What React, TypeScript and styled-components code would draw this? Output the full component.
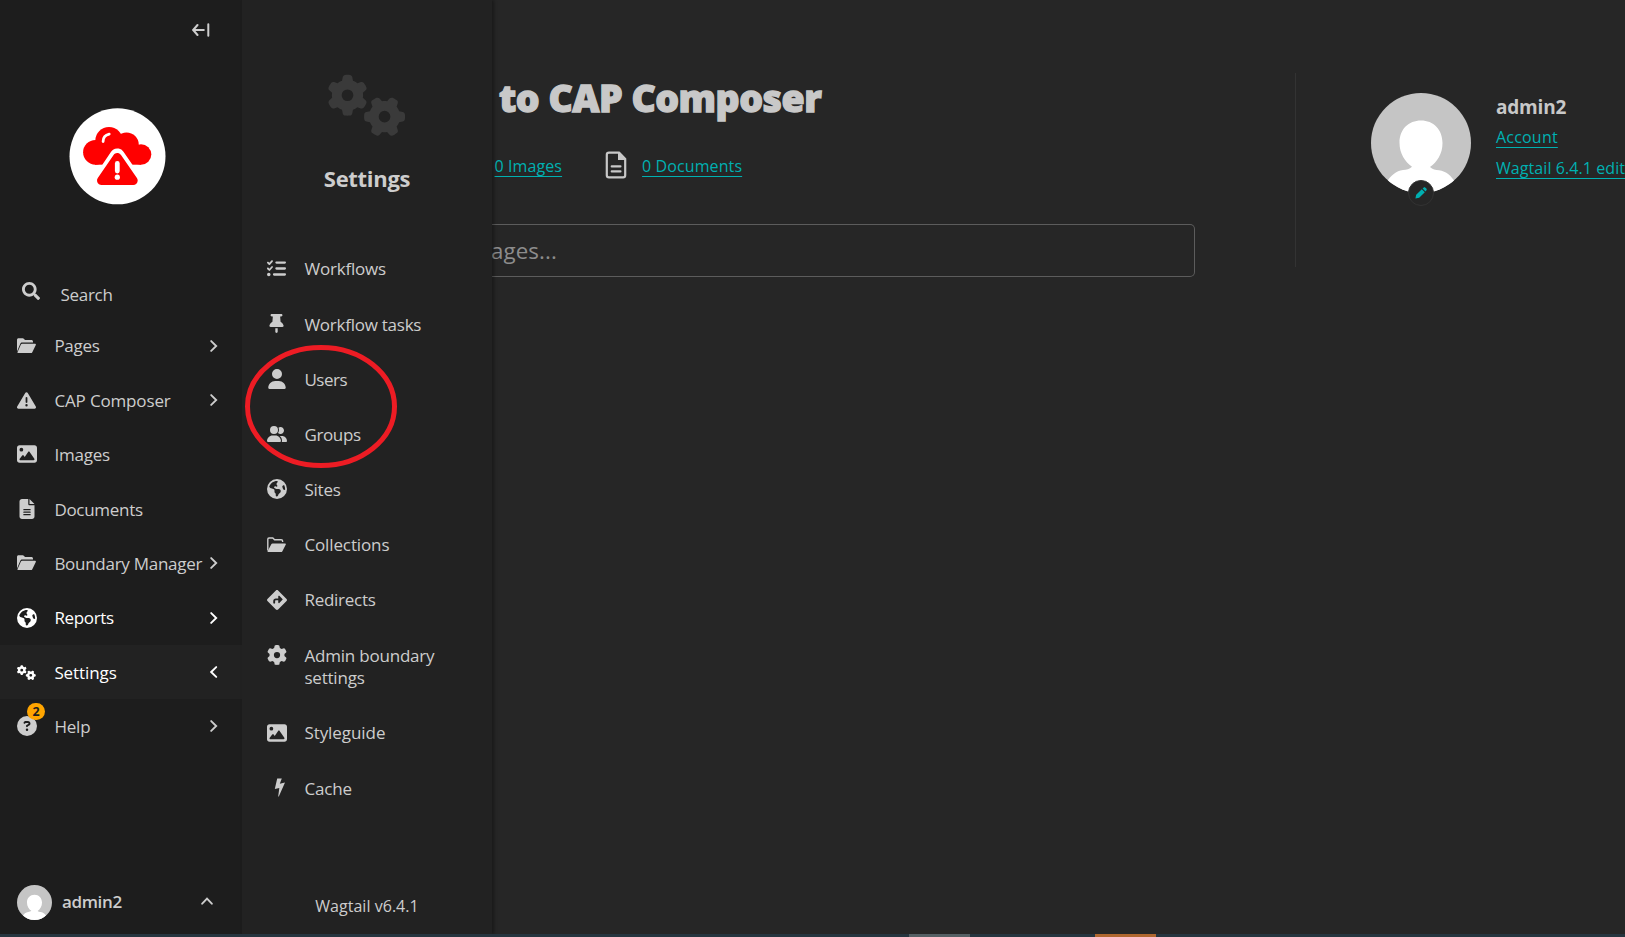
import React from 'react';
import styled, { createGlobalStyle } from 'styled-components';
import {
  FaListCheck, FaThumbtack, FaUser, FaUserGroup, FaEarthAmericas, FaDiamondTurnRight,
  FaGear, FaGears, FaImage, FaTriangleExclamation, FaFileLines, FaCircleQuestion,
} from 'react-icons/fa6';
import { FaSearch } from 'react-icons/fa';

const GlobalStyle = createGlobalStyle`
  * { box-sizing: border-box; }
  body { margin: 0; background: #262626; color: #cdcdcd; font-family: "Open Sans", "Noto Sans", sans-serif; overflow: hidden; }
  h1, h2, h3, ul { margin: 0; padding: 0; }
  svg { display: block; }
`;

const Page = styled.div`display: flex; flex-direction: column; width: 1625px; height: 937px; overflow: hidden; position: relative;`;
const Columns = styled.div`display: flex; height: 934px; overflow: hidden;`;

const Sidebar = styled.nav`width: 242px; flex: none; background: #1d1d1d; display: flex; flex-direction: column;`;
const CollapseBar = styled.div`height: 60px; padding: 23px 0 0 192px;`;
const LogoWrap = styled.div`height: 204px; padding: 47.5px 0 0 69px;`;
const SearchRow = styled.div`height: 54.5px; display: flex; padding-left: 22px;`;
const SearchIcon = styled.span`padding-top: 18px; width: 38.5px;`;
const SearchLabel = styled.span<{ $ls?: number }>`padding-top: 19px; font-size: 17px; line-height: 24px; letter-spacing: ${p => p.$ls ?? 0}px;`;
const NavRow = styled.div<{ $active?: boolean; $bright?: boolean }>`
  height: 54.4px; display: flex; align-items: center; padding-left: 17px; flex: none; position: relative;
  background: ${p => (p.$active ? '#222222' : 'transparent')};
  color: ${p => (p.$bright ? '#ffffff' : '#cdcdcd')};
`;
const IconBox = styled.span`width: 37.4px; flex: none; position: relative; display: flex; align-items: center;`;
const NavLabel = styled.span<{ $ls?: number }>`
  width: 155.6px; padding-top: 1.6px; font-size: 17px; line-height: 22px; white-space: nowrap; letter-spacing: ${p => p.$ls ?? 0}px;
`;
const Badge = styled.span`
  position: absolute; left: 10px; top: -13px; width: 18px; height: 17px; border-radius: 9px; background: #ffa500; color: #1d1d1d;
  font-size: 12.5px; font-weight: 700; line-height: 17px; text-align: center;
`;
const Account = styled.div`margin-top: auto; height: 49px; padding: 0 29px 0 17px; display: flex; align-items: flex-start;`;
const AccountName = styled.span`width: 149px; padding: 4px 0 0 10px; font-size: 17px; line-height: 25px; font-weight: 600; letter-spacing: -0.35px;`;
const AccountCaret = styled.span`padding-top: 12px;`;

const Submenu = styled.section`
  width: 250px; flex: none; background: #222222; display: flex; flex-direction: column; align-items: center;
  box-shadow: 2px 0 3px rgba(0, 0, 0, 0.35); z-index: 1;
`;
const SubmenuIcon = styled.div`margin-top: 66px; height: 97px; color: #3a3a3a;`;
const SubmenuTitle = styled.h2`font-size: 22px; line-height: 30px; font-weight: 700; height: 78px; letter-spacing: -0.3px;`;
const SubList = styled.ul`width: 100%; list-style: none;`;
const SubRow = styled.li`display: flex; padding: 16.35px 20px 16.35px 25px; min-height: 55.2px;`;
const SubIcon = styled.span`width: 37.4px; flex: none; height: 22.5px; display: flex; align-items: center;`;
const SubLabel = styled.span<{ $ls?: number }>`font-size: 17px; line-height: 22.5px; width: 150px; position: relative; top: 1px; letter-spacing: ${p => p.$ls ?? 0}px;`;
const Version = styled.div`margin: auto 0 16px; font-size: 16px; line-height: 24px; letter-spacing: 0.03px;`;

const Main = styled.main`flex: 1; min-width: 0; display: flex; padding-top: 73px;`;
const Overview = styled.div`width: 703px; flex: none;`;
const Title = styled.h1`
  padding-left: 7px; font-size: 37.5px; line-height: 50px; height: 52px; font-weight: 800; letter-spacing: -0.5px; color: #c8c8c8;
  white-space: nowrap; -webkit-text-stroke: 1.3px #c8c8c8;
`;
const Summary = styled.div`height: 99px; padding: 26px 0 0 2.5px; display: flex;`;
const SummaryIcon = styled.span`padding: 0 15px 0 43px;`;
const Link = styled.a<{ $ls?: number }>`
  color: #00b0b1; font-size: 16px; line-height: 22px; height: 22px; white-space: nowrap; text-decoration: underline;
  text-underline-offset: 4px; text-decoration-thickness: 1px; letter-spacing: ${p => p.$ls ?? 0.1}px;
`;
const SummaryLink = styled(Link)`margin-top: 4px;`;
const SearchField = styled.div`
  height: 53px; border: 1px solid #5c5c5c; border-left: 0; border-radius: 0 5px 5px 0; font-size: 22.3px; line-height: 52px;
  color: #8c8c8c; letter-spacing: 0.1px; text-indent: -1px;
`;
const Profile = styled.aside`margin-left: 100px; height: 194px; border-left: 1px solid #333333; padding: 20px 0 0 75px; display: flex; flex: none;`;
const AvatarWrap = styled.div`position: relative; width: 100px; height: 100px; margin-right: 25px;`;
const EditBadge = styled.span`
  position: absolute; left: 37px; top: 87px; width: 26px; height: 26px; border-radius: 50%; background: #262626; border: 1px solid #333333;
  display: flex; align-items: center; justify-content: center;
`;
const ProfileText = styled.div`display: flex; flex-direction: column; align-items: flex-start; width: 129px;`;
const ProfileName = styled.h3`font-size: 19px; line-height: 26px; font-weight: 700; margin: 1px 0 6px; color: #c8c8c8; letter-spacing: -0.2px;`;
const ProfileLink = styled(Link)`margin-bottom: 9px;`;

const Highlight = styled.svg`position: absolute; left: 244px; top: 344px; z-index: 3;`;
const Taskbar = styled.div`height: 3px; display: flex; background: #26353f;`;
const Task = styled.span<{ $gap: number; $color: string }>`margin-left: ${p => p.$gap}px; width: 61px; background: ${p => p.$color};`;

const Chevron = ({ dir }: { dir: 'left' | 'right' | 'up' }) => dir === 'up' ? (
  <svg width="12" height="8" viewBox="0 0 12 8"><path d="M1.2 6.7 6 1.7l4.8 5" fill="none" stroke="currentColor" strokeWidth="1.9" strokeLinecap="round" /></svg>
) : (
  <svg width="8" height="12" viewBox="0 0 8 12"><path d={dir === 'right' ? 'M1.2 1.1 6.2 6l-5 4.9' : 'M6.2 1.1 1.2 6l5 4.9'} fill="none" stroke="currentColor" strokeWidth="1.9" strokeLinecap="round" /></svg>
);

const FolderOpen = () => (
  <svg width="19" height="16" viewBox="0 0 19 16" fill="currentColor">
    <path d="M0 13.5V1.8C0 .9.7.3 1.5.3h4.2c.5 0 .8.2 1.1.5l1.2 1.3h6.4c.9 0 1.6.7 1.6 1.5v1H5.2c-.9 0-1.5.5-1.9 1.2z" />
    <path d="M5.2 5.8h12.9c.7 0 1 .5.7 1.1l-3.5 7.3c-.3.6-.8.9-1.4.9H1.2c-.6 0-.9-.5-.6-1L3.9 6.6c.3-.5.7-.8 1.3-.8z" />
  </svg>
);

const FolderOutline = () => (
  <svg width="19" height="16" viewBox="0 0 19 16" fill="currentColor">
    <path d="M.8 13.5V2.2C.8 1.4 1.3 1 2 1h3.8l1.8 1.8h6.6c.9 0 1.4.5 1.4 1.3v.8" fill="none" stroke="currentColor" strokeWidth="1.4" />
    <path d="M5.500 6.500h12.600c.7 0 1 .5.7 1l-3.4 6.700c-.3.6-.8.9-1.4.9H1.300c-.6 0-.9-.4-.6-1L4.300 7.300c.3-.5.6-.8 1.200-.8z" />
  </svg>
);

const Bolt = () => (
  <svg width="20" height="19" viewBox="0 0 20 19"><path d="M10.2.4h4.6l-2 5.3 5.2-1.2-6.2 14h-.6l1.1-8.6-4.5 1.2z" fill="currentColor" /></svg>
);

const Pencil = () => (
  <svg width="12" height="12" viewBox="0 0 12 12" fill="#00b0b1"><path d="M.4 11.6l.8-3.8 5.6-5.5 3 3-5.6 5.5zM7.6 1.6 8.5.7c.6-.6 1.3-.6 1.9 0l.9.9c.6.6.6 1.3 0 1.9l-.8.9z" /></svg>
);

const Document = () => (
  <svg width="22" height="28" viewBox="0 0 22 28">
    <path d="M4 1.6h10L20.2 8v16.2c0 1.3-.8 2.1-2.1 2.1H4c-1.3 0-2.2-.8-2.2-2.1V3.7c0-1.3.9-2.1 2.2-2.1z" fill="none" stroke="#c8c8c8" strokeWidth="2.2" />
    <path d="M13 1.5V9h7.8V7.5L15 1.5z" fill="#c8c8c8" />
    <path d="M6.7 15.4h8.8M6.7 20.4h8.8" stroke="#c8c8c8" strokeWidth="2.1" strokeLinecap="round" />
  </svg>
);

const Avatar = ({ size }: { size: number }) => (
  <svg width={size} height={size} viewBox="0 0 100 100">
    <defs><clipPath id={`disc${size}`}><circle cx="50" cy="50" r="50" /></clipPath></defs>
    <g clipPath={`url(#disc${size})`}>
      <rect width="100" height="100" fill="#c5c5c5" />
      <path d="M50 27.500c12.400 0 21.500 9 21.500 22.500 0 11-5.500 19-12.500 24 2.500 2.500 5.500 2.800 9 3.200 7.500 1 12 5.500 17 13V102H15V90c5-8 10-12 17-13 3.500-.4 6.500-.7 9-3.200-7-5-12.500-13-12.500-24 0-13.500 9.100-22.300 21.500-22.300z" fill="#fff" />
    </g>
  </svg>
);

const Logo = () => (
  <svg width="97" height="97" viewBox="0 0 97 97">
    <circle cx="48.500" cy="48.300" r="48" fill="#fff" />
    <g fill="#f00">
      <circle cx="40" cy="32.800" r="13.700" /><circle cx="57.500" cy="36.800" r="12.300" />
      <circle cx="26.500" cy="44.300" r="12.400" /><circle cx="72" cy="46.500" r="10.300" />
      <rect x="26" y="40" width="46" height="16.700" />
    </g>
    <path d="M34.100 33.600c0-4 2.400-6.700 6.100-7.500" fill="none" stroke="#fff" strokeWidth="2.800" strokeLinecap="round" />
    <path d="M48.300 48 33.500 70h30z" fill="#fff" stroke="#fff" strokeWidth="15" strokeLinejoin="round" />
    <path d="M48.300 49.500 32.500 72.500h31.700z" fill="#f00" stroke="#f00" strokeWidth="9" strokeLinejoin="round" />
    <path d="M48.300 55.500v7.500" stroke="#fff" strokeWidth="4.800" strokeLinecap="round" /><circle cx="48.300" cy="69.200" r="2.600" fill="#fff" />
  </svg>
);

type NavItem = { label: string; icon: React.ReactNode; ls: number; arrow?: 'left' | 'right'; active?: boolean; bright?: boolean; badge?: string };
const navItems: NavItem[] = [
  { label: 'Pages', icon: <FolderOpen />, ls: -0.3, arrow: 'right' },
  { label: 'CAP Composer', icon: <FaTriangleExclamation size={19} />, ls: -0.15, arrow: 'right' },
  { label: 'Images', icon: <FaImage size={20} />, ls: -0.2 },
  { label: 'Documents', icon: <FaFileLines size={20} />, ls: -0.3 },
  { label: 'Boundary Manager', icon: <FolderOpen />, ls: -0.27, arrow: 'right' },
  { label: 'Reports', icon: <FaEarthAmericas size={20} />, ls: -0.35, arrow: 'right', bright: true },
  { label: 'Settings', icon: <FaGears size={19} />, ls: -0.1, arrow: 'left', active: true, bright: true },
  { label: 'Help', icon: <FaCircleQuestion size={20} />, ls: -0.2, arrow: 'right', badge: '2' },
];

const subItems = [
  { label: 'Workflows', icon: <FaListCheck size={19} />, ls: -0.2 },
  { label: 'Workflow tasks', icon: <FaThumbtack size={19} />, ls: -0.25 },
  { label: 'Users', icon: <FaUser size={20} />, ls: -0.45 },
  { label: 'Groups', icon: <FaUserGroup size={20} />, ls: -0.35 },
  { label: 'Sites', icon: <FaEarthAmericas size={20} />, ls: -0.2 },
  { label: 'Collections', icon: <FolderOutline />, ls: -0.12 },
  { label: 'Redirects', icon: <FaDiamondTurnRight size={20} />, ls: -0.25 },
  { label: 'Admin boundary settings', icon: <FaGear size={20} />, ls: -0.2 },
  { label: 'Styleguide', icon: <FaImage size={20} />, ls: -0.06 },
  { label: 'Cache', icon: <Bolt />, ls: -0.15 },
];

export default function App() {
  return (
    <Page>
      <GlobalStyle />
      <Columns>
        <Sidebar>
          <CollapseBar>
            <svg width="18" height="14" viewBox="0 0 18 14" fill="none" stroke="#cdcdcd" strokeWidth="2" strokeLinecap="round">
              <path d="M5.500 2 1.200 7l4.300 5M1.500 7h10.300M16.300 1.300v11.400" />
            </svg>
          </CollapseBar>
          <LogoWrap><Logo /></LogoWrap>
          <SearchRow>
            <SearchIcon><FaSearch size={18} /></SearchIcon>
            <SearchLabel $ls={-0.3}>Search</SearchLabel>
          </SearchRow>
          {navItems.map(item => (
            <NavRow key={item.label} $active={item.active} $bright={item.bright}>
              <IconBox>{item.icon}{item.badge && <Badge>{item.badge}</Badge>}</IconBox>
              <NavLabel $ls={item.ls}>{item.label}</NavLabel>
              {item.arrow && <Chevron dir={item.arrow} />}
            </NavRow>
          ))}
          <Account>
            <Avatar size={35} />
            <AccountName>admin2</AccountName>
            <AccountCaret><Chevron dir="up" /></AccountCaret>
          </Account>
        </Sidebar>
        <Submenu>
          <SubmenuIcon><FaGears size={78} /></SubmenuIcon>
          <SubmenuTitle>Settings</SubmenuTitle>
          <SubList>
            {subItems.map(item => (
              <SubRow key={item.label}>
                <SubIcon>{item.icon}</SubIcon>
                <SubLabel $ls={item.ls}>{item.label}</SubLabel>
              </SubRow>
            ))}
          </SubList>
          <Version>Wagtail v6.4.1</Version>
        </Submenu>
        <Main>
          <Overview>
            <Title>to CAP Composer</Title>
            <Summary>
              <SummaryLink>0 Images</SummaryLink>
              <SummaryIcon><Document /></SummaryIcon>
              <SummaryLink>0 Documents</SummaryLink>
            </Summary>
            <SearchField>ages...</SearchField>
          </Overview>
          <Profile>
            <AvatarWrap>
              <Avatar size={100} />
              <EditBadge><Pencil /></EditBadge>
            </AvatarWrap>
            <ProfileText>
              <ProfileName>admin2</ProfileName>
              <ProfileLink $ls={0.2}>Account</ProfileLink>
              <ProfileLink $ls={0.08}>Wagtail 6.4.1 edit</ProfileLink>
            </ProfileText>
          </Profile>
        </Main>
      </Columns>
      <Taskbar>
        <Task $gap={909} $color="#556064" />
        <Task $gap={125} $color="#b0672f" />
      </Taskbar>
      <Highlight width="154" height="126" viewBox="0 0 154 126">
        <ellipse cx="77" cy="62.500" rx="73.500" ry="59" fill="none" stroke="#ed1c24" strokeWidth="5" />
      </Highlight>
    </Page>
  );
}
